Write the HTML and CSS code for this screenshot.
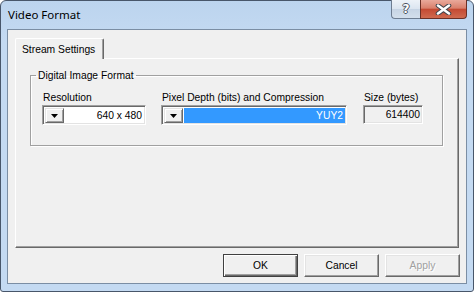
FILE: index.html
```html
<!DOCTYPE html>
<html lang="en">
<head>
  <meta charset="UTF-8" />
  <title>Video Format</title>
  <link rel="stylesheet" href="styles.css">
</head>
<body>
<div class="window">
  <div class="titlebar">
    <span class="title">Video Format</span>
    <div class="caption">
      <div class="cap help"><span>?</span></div>
      <div class="cap close">
        <svg width="17" height="11" viewBox="0 0 17 11">
          <path d="M3 1.5 L14 9.5 M14 1.5 L3 9.5" stroke="#40434a" stroke-width="4.6" stroke-linecap="round" fill="none"/>
          <path d="M3 1.5 L14 9.5 M14 1.5 L3 9.5" stroke="#fff" stroke-width="2.6" stroke-linecap="round" fill="none"/>
        </svg>
      </div>
    </div>
  </div>

  <div class="client">
    <div class="tabs">
      <div class="tab">Stream Settings</div>
    </div>
    <div class="panel">
      <fieldset class="group">
        <legend>Digital Image Format</legend>
        <div class="fields">
          <div class="field res">
            <label>Resolution</label>
            <div class="combo">
              <span class="drop"><svg width="7" height="4" viewBox="0 0 7 4"><polygon points="0,0 7,0 3.5,4" fill="#000"/></svg></span>
              <span class="value">640 x 480</span>
            </div>
          </div>
          <div class="field depth">
            <label>Pixel Depth (bits) and Compression</label>
            <div class="combo">
              <span class="drop"><svg width="7" height="4" viewBox="0 0 7 4"><polygon points="0,0 7,0 3.5,4" fill="#000"/></svg></span>
              <span class="value sel">YUY2</span>
            </div>
          </div>
          <div class="field size">
            <label>Size (bytes)</label>
            <div class="box">614400</div>
          </div>
        </div>
      </fieldset>
    </div>
    <div class="buttons">
      <button class="btn default">OK</button>
      <button class="btn">Cancel</button>
      <button class="btn disabled">Apply</button>
    </div>
  </div>
</div>
</body>
</html>
```

FILE: styles.css
```css
* {
  box-sizing: border-box;
}
body {
  margin: 0;
  background: #fff;
}
.window {
  width: 474px;
  height: 292px;
  border: 1px solid #48566a;
  border-radius: 6px 6px 3px 3px;
  background: linear-gradient(#bcd4ee, #c4daf2 40px, #c4daf2);
  display: flex;
  flex-direction: column;
  font-family: 'Liberation Sans', Arial, sans-serif;
  font-size: 10.3px;
  color: #000;
}
.titlebar {
  height: 28px;
  display: flex;
  justify-content: space-between;
  align-items: flex-start;
  padding-left: 7px;
}
.title {
  font-family: 'Noto Sans', 'Open Sans', sans-serif;
  font-size: 11.5px;
  line-height: 28px;
}
.caption {
  display: flex;
  margin: -1px 6px 0 0;
}
.cap {
  height: 19px;
  display: flex;
  align-items: center;
  justify-content: center;
  border: 1px solid #6d7d91;
  border-top: none;
}
.help {
  width: 29px;
  border-right: none;
  border-radius: 0 0 0 4px;
  background: linear-gradient(#edf2f8, #dbe5f0 50%, #c6d4e4 51%, #d3dfec);
}
.help span {
  font-family: 'DejaVu Sans', sans-serif;
  font-weight: bold;
  font-size: 12px;
  color: #fff;
  text-shadow: 1px 0 #4a5260, -1px 0 #4a5260, 0 1px #4a5260, 0 -1px #4a5260;
}
.close {
  width: 47px;
  border-color: #6b3026;
  border-radius: 0 0 4px 0;
  background: linear-gradient(#e9a99b, #d9806c 45%, #c44a33 52%, #cf6a4f);
}
.client {
  flex: 1;
  margin: 0 6px 7px;
  border: 1px solid #7b8ea4;
  background: #f0f0f0;
  padding: 8px 7px 6px;
  display: flex;
  flex-direction: column;
}
.tabs {
  display: flex;
  height: 20px;
  position: relative;
  z-index: 1;
}
.tab {
  width: 89px;
  height: 21px;
  border: 1px solid #fff;
  border-right-color: #696969;
  border-bottom: none;
  border-radius: 2px 2px 0 0;
  box-shadow: inset -1px 0 #a0a0a0;
  background: #f0f0f0;
  padding: 4px 0 0 6px;
  line-height: 13px;
}
.panel {
  height: 190px;
  border: 1px solid;
  border-color: #fff #696969 #696969 #fff;
  box-shadow: inset -1px -1px #a0a0a0;
}
.group {
  margin: 10px 15px 0 14px;
  padding: 0 0 20px 0;
  min-width: 0;
  border: 1px solid #a0a0a0;
  box-shadow: 1px 1px 0 #fff, inset 1px 1px 0 #fff;
}
.group legend {
  margin-left: 5px;
  padding: 0 2px;
  line-height: 13px;
}
.fields {
  display: flex;
  padding: 9px 0 0 11px;
}
.field {
  display: flex;
  flex-direction: column;
}
.field label {
  height: 14px;
  line-height: 13px;
  padding-left: 1px;
}
.res {
  width: 104px;
  margin-right: 15px;
}
.depth {
  width: 186px;
  margin-right: 16px;
}
.size {
  width: 60px;
}
.combo, .box {
  border: 1px solid;
  border-color: #a0a0a0 #fff #fff #a0a0a0;
  box-shadow: inset 1px 1px #696969, inset -1px -1px #e3e3e3;
}
.combo {
  height: 20px;
  display: flex;
  padding: 2px 1px 1px 2px;
  background: #fff;
}
.drop {
  width: 19px;
  display: flex;
  align-items: center;
  justify-content: center;
  border: 1px solid;
  border-color: #e3e3e3 #696969 #696969 #e3e3e3;
  box-shadow: inset 1px 1px #fff, inset -1px -1px #a0a0a0;
  background: #f0f0f0;
}
.value {
  flex: 1;
  text-align: right;
  padding-right: 2px;
  line-height: 15px;
}
.sel {
  margin-left: 1px;
  background: #3399ff;
  color: #fff;
}
.box {
  height: 19px;
  background: #f0f0f0;
  text-align: right;
  padding: 2px 2px 0 2px;
  line-height: 14px;
}
.buttons {
  display: flex;
  justify-content: flex-end;
  gap: 6px;
  margin: 6px -1px 0 0;
}
.btn {
  width: 75px;
  height: 23px;
  padding: 0;
  font: inherit;
  color: #000;
  background: #f0f0f0;
  border: 1px solid;
  border-color: #fff #696969 #696969 #fff;
  box-shadow: inset -1px -1px #a0a0a0, inset 1px 1px #e3e3e3;
  line-height: 21px;
}
.btn.default {
  border-color: #404040;
  box-shadow: inset 1px 1px #fff, inset -1px -1px #696969, inset -2px -2px #a0a0a0;
}
.btn.disabled {
  color: #a0a0a0;
  text-shadow: 1px 1px #fff;
}
```
